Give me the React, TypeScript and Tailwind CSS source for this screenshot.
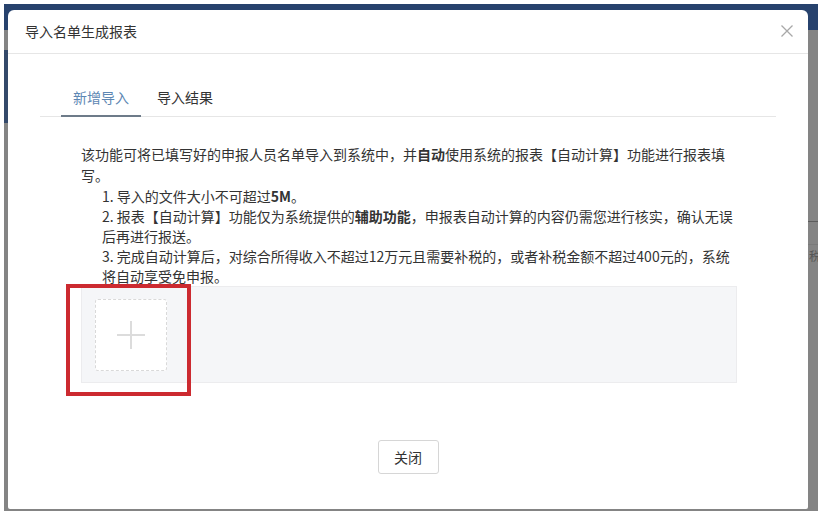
import React from "react";

export default function App() {
  return (
    <div
      className="w-[828px] h-[515px] bg-white overflow-hidden pt-[4px] pl-[4px]"
      style={{ fontFamily: '"Noto Sans CJK SC", "Noto Sans", sans-serif' }}
    >
      {/* dimmed page behind the dialog */}
      <div className="relative w-[814px] h-[507px] bg-[#848484] overflow-hidden">
        <div className="absolute left-0 top-0 w-full h-[26px] bg-[#27426d]" />
        <div className="absolute left-0 top-[46px] w-[6px] h-[73px] bg-[#34496a]" />
        <div className="absolute right-0 top-[217px] w-[10px] h-px bg-[#5c5c5c]" />
        <div className="absolute right-0 top-[240px] w-[10px] h-px bg-[#7a7a7a]" />
        <div className="absolute left-[805px] top-[242px] text-[12px] leading-[20px] text-[#555]">税</div>

        {/* dialog */}
        <div className="relative ml-[4px] mt-[6px] w-[800px] h-[499px] bg-white rounded-t-[6px] rounded-b-[2px] flex flex-col">
          {/* header */}
          <div className="h-[44px] flex items-center justify-between pl-[17px] pr-[14px] border-b border-[#e6e6e6]">
            <span className="text-[14px] text-[#333]">导入名单生成报表</span>
            <svg width="14" height="14" viewBox="0 0 14 14" className="mt-[-2px]">
              <path d="M1.5 1.5 L12.5 12.5 M12.5 1.5 L1.5 12.5" stroke="#a8a8a8" strokeWidth="1.3" fill="none" />
            </svg>
          </div>

          {/* body */}
          <div className="px-[32px] pt-[33px] flex flex-col">
            {/* tabs */}
            <div className="flex pl-[21px] gap-[4px] border-b border-[#e6e6e6]">
              <div className="px-[12px] pb-[8px] text-[14px] leading-[20px] text-[#5d87b3] border-b-2 border-[#6d7b89] mb-[-1px]">
                新增导入
              </div>
              <div className="px-[12px] pb-[8px] text-[14px] leading-[20px] text-[#333]">导入结果</div>
            </div>

            {/* content */}
            <div className="pl-[41px] pr-[39px] pt-[27px] text-[14px] text-[#333]">
              <p className="leading-[21px]">
                该功能可将已填写好的申报人员名单导入到系统中，并<b className="font-bold">自动</b>
                使用系统的报表【自动计算】功能进行报表填写。
              </p>
              <div className="pl-[21px] leading-[20px]">
                <div>
                  1. 导入的文件大小不可超过<b className="font-bold">5M</b>。
                </div>
                <div>
                  2. 报表【自动计算】功能仅为系统提供的<b className="font-bold">辅助功能</b>
                  ，申报表自动计算的内容仍需您进行核实，确认无误后再进行报送。
                </div>
                <div>
                  3. 完成自动计算后，对综合所得收入不超过12万元且需要补税的，或者补税金额不超过400元的，系统将自动享受免申报。
                </div>
              </div>

              {/* upload area */}
              <div className="relative h-[97px] bg-[#f5f6f8] border border-[#ececee] pt-[12px] pl-[13px]">
                <div className="w-[72px] h-[72px] bg-white border border-dashed border-[#d9d9d9] rounded-[3px] flex items-center justify-center">
                  <svg width="28" height="28" viewBox="0 0 28 28">
                    <path d="M14 0 V28 M0 14 H28" stroke="#dcdcdc" strokeWidth="2" fill="none" />
                  </svg>
                </div>
                {/* red highlight annotation */}
                <div className="absolute left-[-16px] top-[-3px] w-[125px] h-[112px] border-[4px] border-[#cc2a30]" />
              </div>
            </div>

            {/* footer button */}
            <div className="flex justify-center pt-[57px]">
              <button className="w-[61px] h-[34px] border border-[#d6d6d6] rounded-[3px] bg-white text-[14px] text-[#333]">
                关闭
              </button>
            </div>
          </div>
        </div>
      </div>
    </div>
  );
}
